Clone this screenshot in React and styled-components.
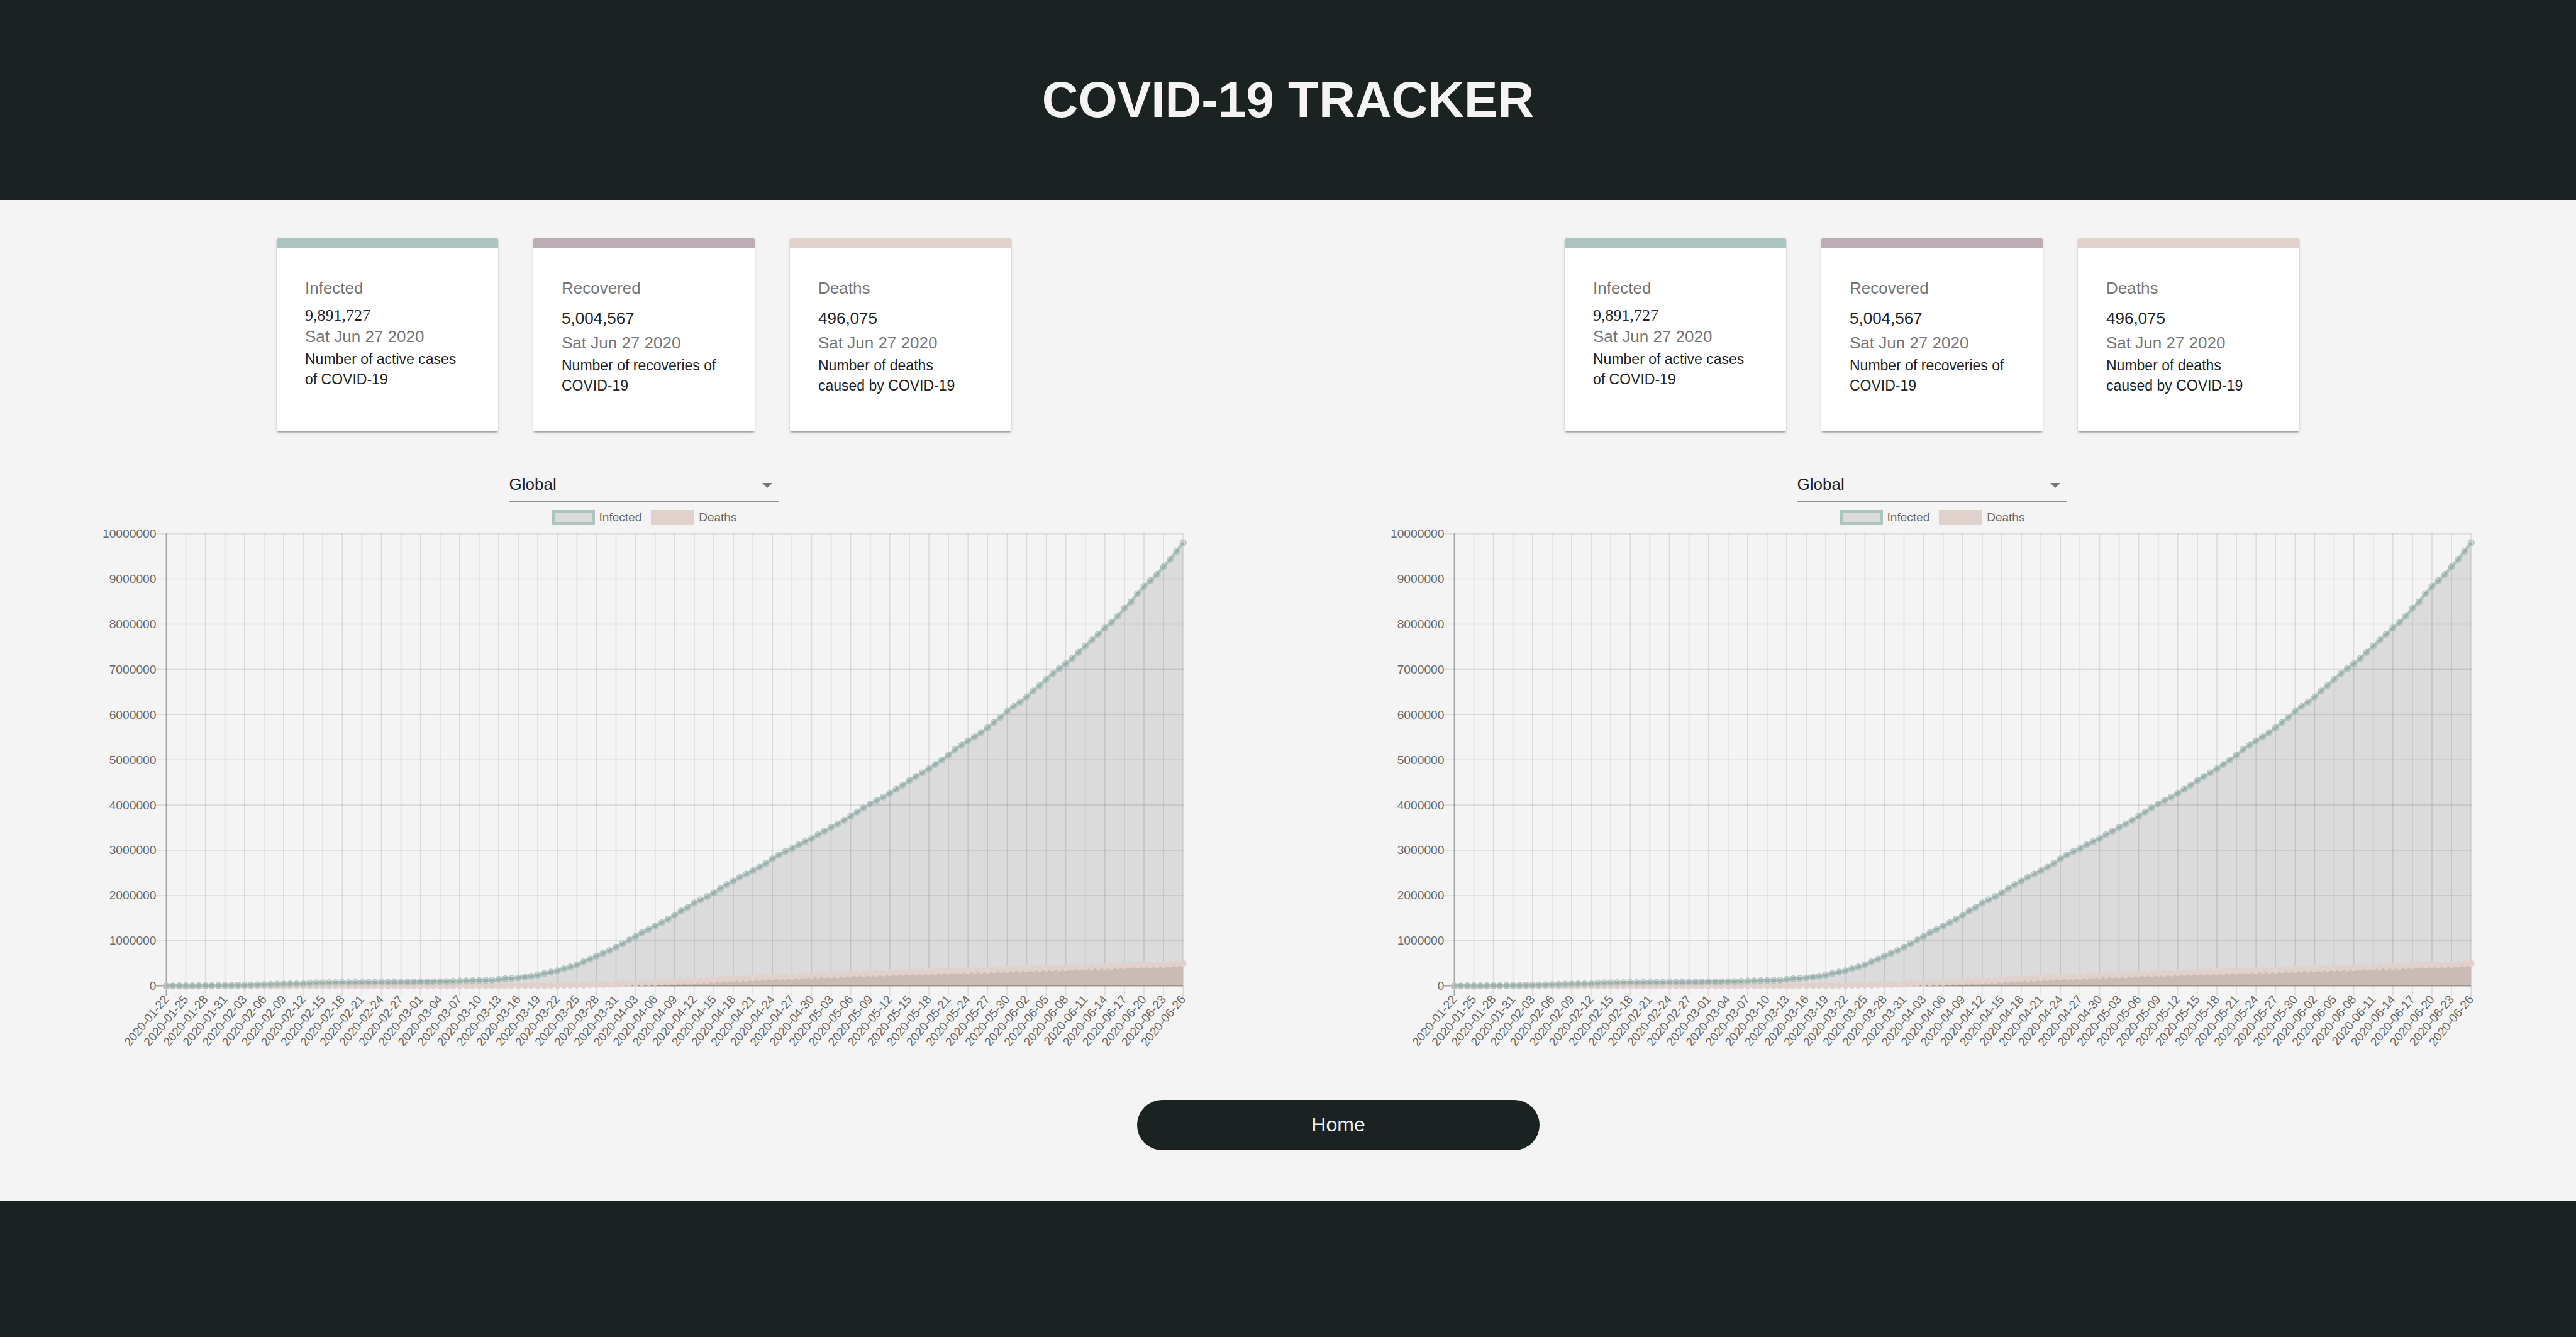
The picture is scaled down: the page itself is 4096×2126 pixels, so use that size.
import React, { useId } from "react";
import styled, { createGlobalStyle } from "styled-components";

const GlobalStyle = createGlobalStyle`
  *, *::before, *::after { box-sizing: border-box; }
  body {
    margin: 0;
    background: #f4f4f4;
    font-family: "Liberation Sans", Arial, sans-serif;
  }
`;

const Page = styled.div`
  min-height: 100vh;
  display: flex;
  flex-direction: column;
`;

const Header = styled.header`
  height: 318px;
  display: flex;
  align-items: center;
  justify-content: center;
  background: #1b2322;
`;

const Title = styled.h1`
  margin: 0;
  font-size: 80px;
  line-height: 80px;
  font-weight: 700;
  color: #f4f4f4;
`;

const Main = styled.main`
  display: flex;
  flex-direction: column;
  padding: 61px 0 80px;
`;

const Panels = styled.div`
  display: grid;
  grid-template-columns: 1fr 1fr;
`;

const Panel = styled.section`
  display: flex;
  flex-direction: column;
  align-items: center;
`;

const Cards = styled.div`
  display: flex;
  justify-content: center;
  gap: 56px;
`;

const Card = styled.article`
  width: 352px;
  padding: 44px 45px 57px;
  background: #fff;
  border-top: 16px solid ${(p) => p.$accent};
  border-radius: 2px;
  box-shadow:
    0 3px 2px -2px rgba(0, 0, 0, 0.2),
    0 2px 2px 0 rgba(0, 0, 0, 0.14),
    0 2px 5px 0 rgba(0, 0, 0, 0.12);
`;

const CardLabel = styled.p`
  margin: 0 0 9px;
  font-size: 26px;
  line-height: 39px;
  color: #757575;
`;

const CardValue = styled.p`
  margin: 0;
  font-size: 26px;
  line-height: ${(p) => (p.$serif ? "29px" : "39px")};
  font-family: ${(p) =>
    p.$serif ? '"Liberation Serif", "Times New Roman", serif' : "inherit"};
  color: #212121;
`;

const CardDate = styled.p`
  margin: 0;
  font-size: 26px;
  line-height: 39px;
  color: #757575;
`;

const CardText = styled.p`
  margin: 0;
  font-size: 23px;
  line-height: 32px;
  color: #212121;
`;

const Picker = styled.div`
  width: 429px;
  margin-top: 61px;
  display: grid;
  align-items: center;
  border-bottom: 2px solid #8d8d8d;
`;

const Select = styled.select`
  grid-area: 1 / 1;
  width: 100%;
  height: 49px;
  padding: 0 38px 4px 0;
  border: 0;
  border-radius: 0;
  background: transparent;
  appearance: none;
  font-family: inherit;
  font-size: 26px;
  color: #212121;
`;

const Arrow = styled.svg`
  grid-area: 1 / 1;
  justify-self: end;
  width: 16px;
  height: 8px;
  margin-right: 11px;
  pointer-events: none;
`;

const Legend = styled.ul`
  display: flex;
  gap: 15px;
  margin: 13px 0 4px;
  padding: 0;
  list-style: none;
`;

const LegendItem = styled.li`
  display: flex;
  align-items: center;
  gap: 7px;
  font-size: 19px;
  line-height: 24px;
  color: #666;
`;

const Swatch = styled.span`
  width: 69px;
  height: 24px;
  background: ${(p) => p.$fill};
  border: 5px solid ${(p) => p.$stroke};
`;

const Plot = styled.svg`
  display: block;
  width: 85%;
  height: auto;
  font-family: "Liberation Sans", Arial, sans-serif;
  font-size: 12px;
`;

const HomeButton = styled.button`
  align-self: center;
  width: 640px;
  height: 80px;
  margin: 70px 0 0 160px;
  border: 0;
  border-radius: 40px;
  background: #1b2322;
  color: #f4f4f4;
  font-family: inherit;
  font-size: 32px;
  cursor: pointer;
`;

const Footer = styled.footer`
  flex: 1;
  min-height: 160px;
  background: #1b2322;
`;

const TEAL = "#adc5c1";
const MAUVE = "#bbadb3";
const PINK = "#e1d1cc";

// Cumulative worldwide cases per day, 2020-01-22 to 2020-06-26.
const infected = [
  555, 654, 941, 1434, 2118, 2927, 5578, 6167, 8235, 9927,
  12038, 16787, 19887, 23898, 27643, 30802, 34395, 37129, 40159, 42771,
  44814, 45232, 60384, 66912, 69055, 71238, 73273, 75155, 75655, 76216,
  76846, 78608, 78990, 79558, 80412, 81396, 82755, 84126, 86013,
  88371, 90309, 92844, 95124, 97886, 101801, 105847, 109821, 113590, 118620,
  125875, 128352, 145205, 156101, 167454, 181574, 197102, 214910, 242708,
  272167, 304524, 335955, 378287, 418045, 467653, 529591, 593291, 660706,
  720117, 782365, 857487,
  932605, 1013157, 1095917, 1176060, 1249754, 1321481, 1396476, 1480202,
  1565278, 1657526, 1735650, 1834721, 1904838, 1976191, 2056054, 2152437,
  2240190, 2317758, 2401378, 2472258, 2549122, 2624088, 2708884, 2811192,
  2897624, 2971475, 3041764, 3116398, 3193886, 3256846,
  3343777, 3427343, 3506729, 3583055, 3662691, 3755341, 3845718, 3938064,
  4024009, 4101699, 4177502, 4261747, 4347018, 4442163, 4542347, 4634068,
  4713620, 4801943, 4897492, 4996472, 5102424, 5224000, 5321000, 5421000,
  5506000, 5602000, 5706000, 5825000, 5940000, 6073000, 6181000,
  6277000, 6389000, 6522000, 6644000, 6778000, 6904000, 7015000, 7123000,
  7245000, 7379000, 7516000, 7646000, 7779000, 7916000, 8035000, 8176000,
  8350000, 8491000, 8673000, 8832000, 8962000, 9099000, 9266000, 9433000,
  9611000, 9800000,
];

const deaths = [
  17, 18, 26, 42, 56, 82, 131, 133, 171, 213,
  259, 362, 426, 492, 564, 634, 719, 806, 906, 1013,
  1113, 1118, 1371, 1523, 1666, 1770, 1868, 2007, 2122, 2247,
  2251, 2458, 2469, 2629, 2708, 2770, 2814, 2872, 2941,
  2996, 3085, 3160, 3254, 3348, 3460, 3558, 3803, 3996, 4262,
  4615, 4720, 5404, 5819, 6440, 7126, 7905, 8733, 9867,
  11299, 12973, 14632, 16497, 18615, 21181, 23970, 27198, 30652,
  33925, 37582, 42107,
  46809, 52983, 58787, 64606, 69374, 74565, 81865, 88338,
  95455, 102525, 108503, 114091, 119482, 125984, 134177, 143801,
  153822, 159510, 165044, 170000, 176583, 183000, 190000, 197000,
  203000, 206500, 211000, 217000, 227000, 233400,
  238600, 243800, 247500, 251500, 257200, 263800, 269500, 274900,
  279300, 282700, 286300, 292000, 297200, 302400, 307700, 311800,
  315200, 318500, 323300, 328100, 333000, 338200, 342100, 345000,
  346200, 350400, 355600, 360300, 365000, 369100, 371900,
  375500, 380200, 385900, 391100, 395900, 399700, 402700, 406500,
  411400, 416200, 421500, 425400, 429700, 433000, 436800, 443600,
  448900, 454000, 460200, 464400, 468600, 472100, 477600, 482800,
  489400, 496000,
];

const LEFT = 69;
const RIGHT = 1079.5;
const TOP = 6;
const BOTTOM = 455.5;
const MAX = 10000000;

const days = infected.length;
const xAt = (i) => LEFT + ((RIGHT - LEFT) * i) / (days - 1);
const yAt = (v) => BOTTOM - ((BOTTOM - TOP) * v) / MAX;
const dateAt = (i) =>
  new Date(Date.UTC(2020, 0, 22 + i)).toISOString().slice(0, 10);
const lineOf = (data) =>
  data.map((v, i) => `${i ? "L" : "M"}${xAt(i).toFixed(2)} ${yAt(v).toFixed(2)}`).join("");
const areaOf = (data) => `${lineOf(data)}L${RIGHT} ${BOTTOM}L${LEFT} ${BOTTOM}Z`;

const xTicks = Array.from({ length: 53 }, (_, k) => k * 3);
const yTicks = Array.from({ length: 11 }, (_, k) => k * 1000000);

function Series({ data, stroke, fill }) {
  return (
    <g stroke={stroke}>
      <path d={lineOf(data)} fill="none" strokeWidth="3" />
      {data.map((v, i) => (
        <circle key={i} cx={xAt(i)} cy={yAt(v)} r="3" fill={fill} />
      ))}
    </g>
  );
}

function CasesChart() {
  return (
    <Plot viewBox="0 0 1088 525" role="img" aria-label="Infected and deaths over time">
      <g stroke="#000" strokeOpacity="0.1">
        {yTicks.map((v) => (
          <line key={v} x1={LEFT - 10} x2={RIGHT} y1={yAt(v)} y2={yAt(v)} />
        ))}
        {xTicks.map((i) => (
          <line key={i} x1={xAt(i)} x2={xAt(i)} y1={TOP} y2={BOTTOM + 10} />
        ))}
      </g>
      <path d={areaOf(deaths)} fill={PINK} />
      <path d={areaOf(infected)} fill="#000" fillOpacity="0.1" />
      <g stroke="#000" strokeOpacity="0.25">
        <line x1={LEFT - 10} x2={RIGHT} y1={BOTTOM} y2={BOTTOM} />
        <line x1={LEFT} x2={LEFT} y1={TOP} y2={BOTTOM + 10} />
      </g>
      <Series data={deaths} stroke={PINK} fill={PINK} />
      <Series data={infected} stroke={TEAL} fill="rgba(0, 0, 0, 0.1)" />
      <g fill="#666" textAnchor="end">
        {yTicks.map((v) => (
          <text key={v} x={LEFT - 10} y={yAt(v) + 4}>
            {v}
          </text>
        ))}
        {xTicks.map((i) => (
          <text
            key={i}
            dy="4"
            transform={`translate(${xAt(i)} ${BOTTOM + 11}) rotate(-50)`}
          >
            {dateAt(i)}
          </text>
        ))}
      </g>
    </Plot>
  );
}

const stats = [
  { label: "Infected", value: "9,891,727", text: "Number of active cases of COVID-19", accent: TEAL, serif: true },
  { label: "Recovered", value: "5,004,567", text: "Number of recoveries of COVID-19", accent: MAUVE },
  { label: "Deaths", value: "496,075", text: "Number of deaths caused by COVID-19", accent: PINK },
];

function TrackerPanel() {
  const id = useId();
  return (
    <Panel>
      <Cards>
        {stats.map((s) => (
          <Card key={s.label} $accent={s.accent}>
            <CardLabel>{s.label}</CardLabel>
            <CardValue $serif={s.serif}>{s.value}</CardValue>
            <CardDate>Sat Jun 27 2020</CardDate>
            <CardText>{s.text}</CardText>
          </Card>
        ))}
      </Cards>
      <Picker>
        <Select id={id} aria-label="Country" defaultValue="global">
          <option value="global">Global</option>
        </Select>
        <Arrow viewBox="0 0 10 5" aria-hidden="true">
          <path d="M0 0h10L5 5z" fill="#757575" />
        </Arrow>
      </Picker>
      <Legend>
        <LegendItem>
          <Swatch $fill="#dbdbdb" $stroke={TEAL} />
          Infected
        </LegendItem>
        <LegendItem>
          <Swatch $fill={PINK} $stroke={PINK} />
          Deaths
        </LegendItem>
      </Legend>
      <CasesChart />
    </Panel>
  );
}

export default function App() {
  return (
    <Page>
      <GlobalStyle />
      <Header>
        <Title>COVID-19 TRACKER</Title>
      </Header>
      <Main>
        <Panels>
          <TrackerPanel />
          <TrackerPanel />
        </Panels>
        <HomeButton type="button">Home</HomeButton>
      </Main>
      <Footer />
    </Page>
  );
}
